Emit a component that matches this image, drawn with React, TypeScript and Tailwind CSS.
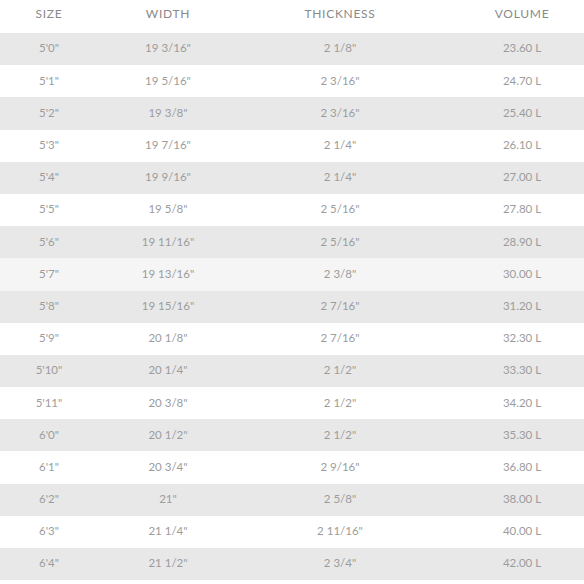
const rows: [string, string, string, string][] = [
    ['5\'0"', '19 3/16"', '2 1/8"', '23.60 L'],
    ['5\'1"', '19 5/16"', '2 3/16"', '24.70 L'],
    ['5\'2"', '19 3/8"', '2 3/16"', '25.40 L'],
    ['5\'3"', '19 7/16"', '2 1/4"', '26.10 L'],
    ['5\'4"', '19 9/16"', '2 1/4"', '27.00 L'],
    ['5\'5"', '19 5/8"', '2 5/16"', '27.80 L'],
    ['5\'6"', '19 11/16"', '2 5/16"', '28.90 L'],
    ['5\'7"', '19 13/16"', '2 3/8"', '30.00 L'],
    ['5\'8"', '19 15/16"', '2 7/16"', '31.20 L'],
    ['5\'9"', '20 1/8"', '2 7/16"', '32.30 L'],
    ['5\'10"', '20 1/4"', '2 1/2"', '33.30 L'],
    ['5\'11"', '20 3/8"', '2 1/2"', '34.20 L'],
    ['6\'0"', '20 1/2"', '2 1/2"', '35.30 L'],
    ['6\'1"', '20 3/4"', '2 9/16"', '36.80 L'],
    ['6\'2"', '21"', '2 5/8"', '38.00 L'],
    ['6\'3"', '21 1/4"', '2 11/16"', '40.00 L'],
    ['6\'4"', '21 1/2"', '2 3/4"', '42.00 L'],
];

const cols = 'grid grid-cols-[98px_140px_204px_142px] items-center text-center';

const App = () => {
    return (
        <div className="h-[584px] w-[584px] bg-white font-['Lato',sans-serif] text-[11.5px] text-[#9c9c9c]">
            <div className={`${cols} h-[33px] pb-[5px] text-[12px] tracking-[0.06em] text-[#8a8a8a]`}>
                <span>SIZE</span>
                <span>WIDTH</span>
                <span>THICKNESS</span>
                <span className="pl-[18px]">VOLUME</span>
            </div>

            {rows.map((row, i) => (
                <div
                    key={row[0]}
                    className={`${cols} h-[32.2px] pb-[2px] ${
                        i % 2 === 0 ? 'bg-[#e8e8e8]' : i === 7 ? 'bg-[#f5f5f5]' : 'bg-white'
                    }`}
                >
                    <span>{row[0]}</span>
                    <span>{row[1]}</span>
                    <span>{row[2]}</span>
                    <span className="pl-[18px]">{row[3]}</span>
                </div>
            ))}
        </div>
    );
};

export default App;
